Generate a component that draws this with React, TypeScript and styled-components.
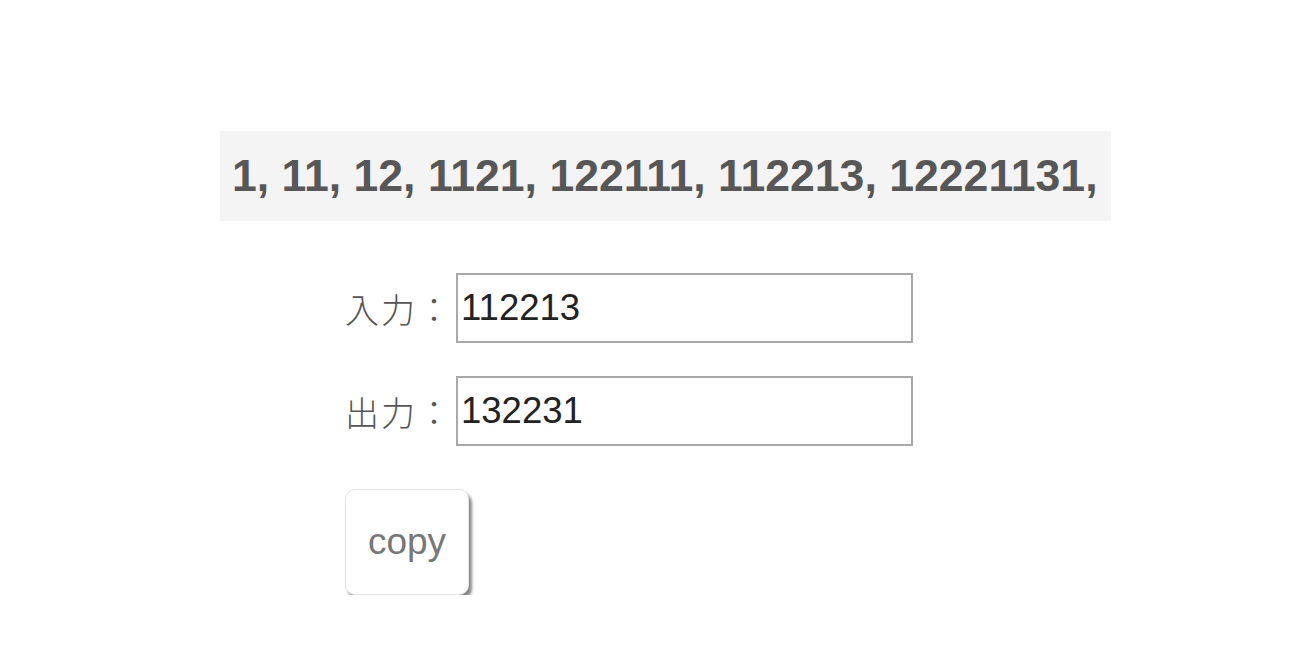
import React, { useState } from "react";
import styled, { createGlobalStyle } from "styled-components";

const Global = createGlobalStyle`
  html, body { margin: 0; padding: 0; background: #ffffff; }
  body { font-family: "Liberation Sans", Arial, sans-serif; }
`;

const Page = styled.div`
  padding: 131px 0 0 220px;
`;

const Sequence = styled.div`
  display: inline-block;
  box-sizing: border-box;
  width: 891px;
  height: 90px;
  padding: 0 0 0 12px;
  background: #f4f4f4;
  color: #575757;
  font-family: "Liberation Sans", Arial, sans-serif;
  font-weight: bold;
  font-size: 44.6px;
  line-height: 90px;
  white-space: nowrap;
`;

const Form = styled.div`
  margin: 52px 0 0 125px;
  display: flex;
  flex-direction: column;
  align-items: flex-start;
  gap: 33px;
`;

const Row = styled.label`
  display: flex;
  align-items: center;
`;

const Label = styled.span`
  width: 111px;
  color: #555555;
  font-family: "Noto Sans CJK JP", "Noto Sans CJK SC", sans-serif;
  font-weight: 300;
  font-size: 34px;
  letter-spacing: 2px;
`;

const Field = styled.input`
  box-sizing: border-box;
  width: 457px;
  height: 70px;
  margin: 0;
  padding: 0 4px 0 3px;
  border: 2px solid #a9a9a9;
  color: #222222;
  font-family: "Liberation Sans", Arial, sans-serif;
  font-size: 36.5px;
  outline: none;
`;

const CopyButton = styled.button`
  margin-top: 10px;
  box-sizing: border-box;
  width: 124px;
  height: 106px;
  padding: 0;
  border: 1px solid #e4e4e4;
  border-radius: 10px;
  background: #ffffff;
  box-shadow: 3px 4px 3px #8a8a8a;
  color: #777777;
  font-family: "Liberation Sans", Arial, sans-serif;
  font-size: 37px;
  cursor: pointer;
`;

function lookAndSay(s: string): string {
  let out = "";
  let i = 0;
  while (i < s.length) {
    let j = i;
    while (j < s.length && s[j] === s[i]) j++;
    out += s[i] + String(j - i);
    i = j;
  }
  return out;
}

export default function App() {
  const [input, setInput] = useState("112213");
  const output = input === "112213" ? "132231" : lookAndSay(input);
  return (
    <>
      <Global />
      <Page>
        <Sequence>1, 11, 12, 1121, 122111, 112213, 12221131,</Sequence>
        <Form>
          <Row>
            <Label>入力：</Label>
            <Field value={input} onChange={(e) => setInput(e.target.value)} />
          </Row>
          <Row>
            <Label>出力：</Label>
            <Field value={output} readOnly />
          </Row>
          <CopyButton>copy</CopyButton>
        </Form>
      </Page>
    </>
  );
}
